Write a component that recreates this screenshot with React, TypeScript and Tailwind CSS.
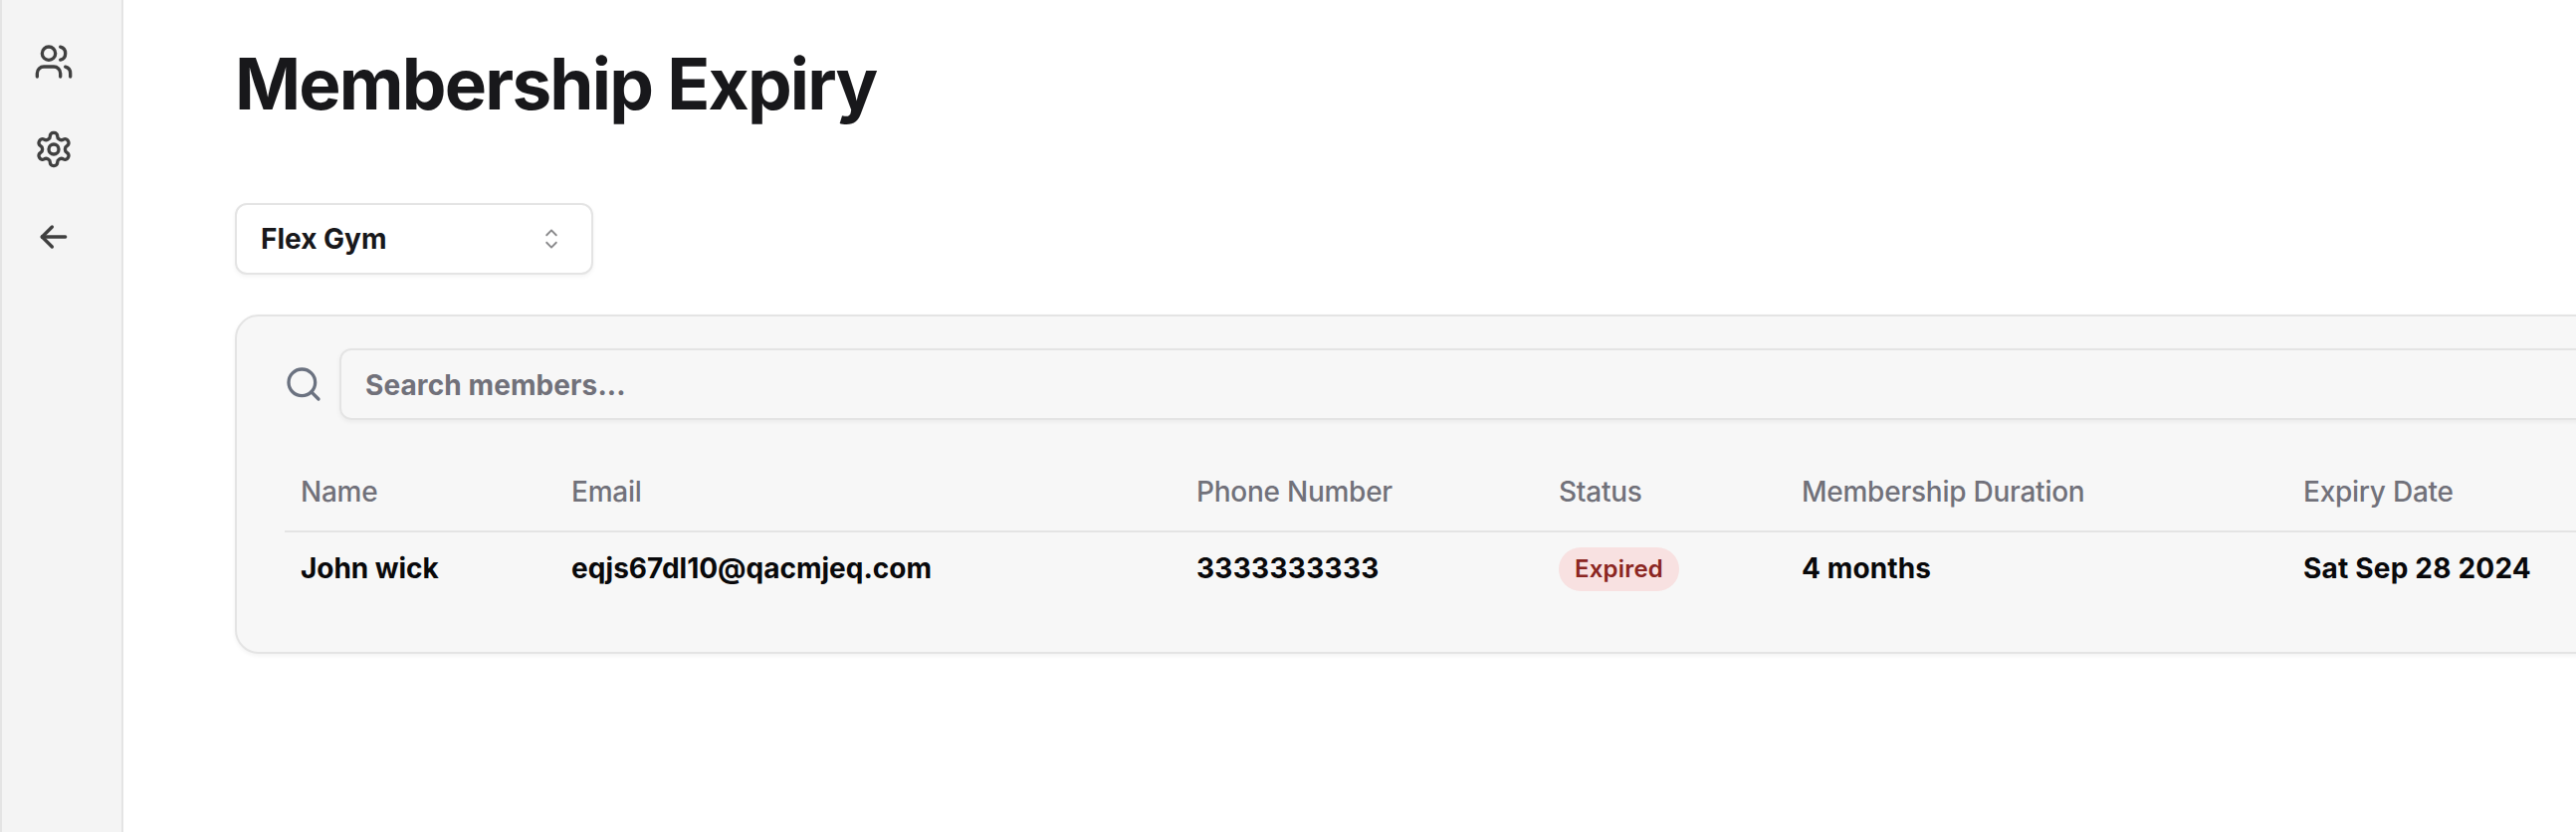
import type { ReactNode } from "react";

function Icon({ children, className }: { children: ReactNode; className: string }) {
  return (
    <svg viewBox="0 0 24 24" fill="none" stroke="currentColor" strokeWidth={2} strokeLinecap="round" strokeLinejoin="round" className={className}>
      {children}
    </svg>
  );
}

function Sidebar() {
  return (
    <aside className="flex w-[124px] shrink-0 flex-col gap-12 border-x-2 border-[#e4e4e4] bg-[#f4f4f4] pt-[42px] pl-8 text-[#404040]">
      <Icon className="size-10">
        <path d="M16 21v-2a4 4 0 0 0-4-4H6a4 4 0 0 0-4 4v2" />
        <circle cx="9" cy="7" r="4" />
        <path d="M22 21v-2a4 4 0 0 0-3-3.87" />
        <path d="M16 3.13a4 4 0 0 1 0 7.75" />
      </Icon>
      <Icon className="size-10">
        <path d="M12.22 2h-.44a2 2 0 0 0-2 2v.18a2 2 0 0 1-1 1.73l-.43.25a2 2 0 0 1-2 0l-.15-.08a2 2 0 0 0-2.73.73l-.22.38a2 2 0 0 0 .73 2.73l.15.1a2 2 0 0 1 1 1.72v.51a2 2 0 0 1-1 1.74l-.15.09a2 2 0 0 0-.73 2.73l.22.38a2 2 0 0 0 2.73.73l.15-.08a2 2 0 0 1 2 0l.43.25a2 2 0 0 1 1 1.73V20a2 2 0 0 0 2 2h.44a2 2 0 0 0 2-2v-.18a2 2 0 0 1 1-1.73l.43-.25a2 2 0 0 1 2 0l.15.08a2 2 0 0 0 2.73-.73l.22-.39a2 2 0 0 0-.73-2.73l-.15-.08a2 2 0 0 1-1-1.74v-.5a2 2 0 0 1 1-1.74l.15-.09a2 2 0 0 0 .73-2.73l-.22-.38a2 2 0 0 0-2.73-.73l-.15.08a2 2 0 0 1-2 0l-.43-.25a2 2 0 0 1-1-1.73V4a2 2 0 0 0-2-2z" />
        <circle cx="12" cy="12" r="3" />
      </Icon>
      <Icon className="size-10">
        <path d="M5 12h14" />
        <path d="M5 12l6 6" />
        <path d="M5 12l6-6" />
      </Icon>
    </aside>
  );
}

function GymSelect() {
  return (
    <button className="mt-20 flex h-[72px] w-[360px] items-center justify-between rounded-xl border-2 border-[#e4e4e4] bg-white px-6 text-[28px] font-bold text-[#18181b] shadow-[0_2px_4px_rgba(0,0,0,0.05)]">
      Flex Gym
      <svg viewBox="0 0 15 15" fill="currentColor" className="size-8 opacity-50">
        <path
          fillRule="evenodd"
          clipRule="evenodd"
          d="M4.93179 5.43179C4.75605 5.60753 4.75605 5.89245 4.93179 6.06819C5.10753 6.24392 5.39245 6.24392 5.56819 6.06819L7.49999 4.13638L9.43179 6.06819C9.60753 6.24392 9.89245 6.24392 10.0682 6.06819C10.2439 5.89245 10.2439 5.60753 10.0682 5.43179L7.81819 3.18179C7.73379 3.0974 7.61933 3.04999 7.49999 3.04999C7.38064 3.04999 7.26618 3.0974 7.18179 3.18179L4.93179 5.43179ZM10.0682 9.56819C10.2439 9.39245 10.2439 9.10753 10.0682 8.93179C9.89245 8.75606 9.60753 8.75606 9.43179 8.93179L7.49999 10.8636L5.56819 8.93179C5.39245 8.75606 5.10753 8.75606 4.93179 8.93179C4.75605 9.10753 4.75605 9.39245 4.93179 9.56819L7.18179 11.8182C7.35753 11.9939 7.64245 11.9939 7.81819 11.8182L10.0682 9.56819Z"
        />
      </svg>
    </button>
  );
}

const columns = [
  { label: "Name", width: "w-[272px]" },
  { label: "Email", width: "w-[628px]" },
  { label: "Phone Number", width: "w-[364px]" },
  { label: "Status", width: "w-[244px]" },
  { label: "Membership Duration", width: "w-[504px]" },
  { label: "Expiry Date", width: "w-[350px]" },
];

function MembersTable() {
  return (
    <table className="mt-8 w-[2362px] table-fixed text-left text-[28px]">
      <thead>
        <tr className="h-20 border-b-2 border-[#e4e4e4] text-[#71717a]">
          {columns.map((c) => (
            <th key={c.label} className={`${c.width} px-4 font-medium tracking-[-0.25px]`}>
              {c.label}
            </th>
          ))}
        </tr>
      </thead>
      <tbody>
        <tr className="h-[73px] font-bold text-[#09090b]">
          <td className="px-4 tracking-[-0.05px]">John wick</td>
          <td className="px-4">eqjs67dl10@qacmjeq.com</td>
          <td className="px-4 tracking-[0.3px]">3333333333</td>
          <td className="px-4">
            <span className="mt-0.5 flex h-11 w-fit items-center rounded-full bg-[#f8e1e1] px-4 text-2xl font-semibold tracking-[0.2px] text-[#8b2622]">Expired</span>
          </td>
          <td className="px-4 tracking-[0.1px]">4 months</td>
          <td className="px-4 tracking-[0.2px]">Sat Sep 28 2024</td>
        </tr>
      </tbody>
    </table>
  );
}

export default function App() {
  return (
    <div className="flex h-[836px] w-[2588px] overflow-hidden bg-white font-['Inter',sans-serif]">
      <Sidebar />
      <main className="min-w-0 flex-1 overflow-hidden pl-28">
        <h1 className="pt-11 text-[71px] leading-[80px] font-bold tracking-[-1.8px] text-[#18181b]">Membership Expiry</h1>
        <GymSelect />
        <section className="mt-10 h-[341px] w-[2464px] rounded-3xl border-2 border-[#e4e4e4] bg-[#f7f7f7] pt-8 pl-12 shadow-[0_2px_4px_rgba(0,0,0,0.05)]">
          <div className="-ml-px flex items-center gap-4">
            <Icon className="size-10 text-[#6b7280]">
              <circle cx="11" cy="11" r="8" />
              <path d="m21 21-4.3-4.3" />
            </Icon>
            <div className="flex h-[72px] w-[2306px] items-center rounded-xl border-2 border-[#e4e4e4] px-6 pt-0.5 text-[28px] font-bold tracking-[0.1px] text-[#71717a] shadow-[0_2px_4px_rgba(0,0,0,0.05)]">
              Search members...
            </div>
          </div>
          <MembersTable />
        </section>
      </main>
    </div>
  );
}
